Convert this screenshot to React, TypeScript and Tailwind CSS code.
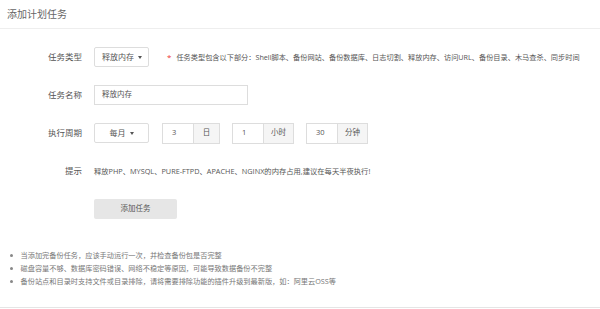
import React from "react";

const font = { fontFamily: '"Open Sans","Noto Sans CJK SC",sans-serif' };

function Row({ label, children }: { label: string; children: React.ReactNode }) {
  return (
    <div className="flex items-center h-[20px] mb-[18px]">
      <div className="w-[82px] text-right text-[8.5px] text-[#555]">{label}</div>
      <div className="ml-[12px] flex items-center">{children}</div>
    </div>
  );
}

function Caret() {
  return <span className="ml-[4px] inline-block border-x-[2.5px] border-t-[3px] border-x-transparent border-t-[#555]" />;
}

function Group({ value, unit }: { value: string; unit: string }) {
  return (
    <div className="flex h-[21px] text-[7.5px] text-[#555] mr-[12px]">
      <div className="w-[32px] border border-[#ddd] flex items-center pl-[9px] bg-white">{value}</div>
      <div className="border border-l-0 border-[#ddd] bg-[#f5f5f5] flex items-center justify-center px-[7px] min-w-[26px]">
        {unit}
      </div>
    </div>
  );
}

export default function App() {
  return (
    <div style={font} className="w-[600px] h-[309px] bg-white">
      <div className="h-[308px] border-b border-[#e5e5e5]">
        <div className="h-[29px] border-b border-[#eee] flex items-center px-[7px] text-[10px] text-[#666]">
          添加计划任务
        </div>
        <div className="pt-[18px]">
          <Row label="任务类型">
            <div className="w-[55px] h-[20px] border border-[#ddd] rounded-[2px] flex items-center pl-[7px] text-[8px] text-[#555]">
              释放内存
              <Caret />
            </div>
            <span className="ml-[18px] text-[#e33] text-[8px]">*</span>
            <span className="ml-[5px] text-[7.2px] text-[#555]">
              任务类型包含以下部分：Shell脚本、备份网站、备份数据库、日志切割、释放内存、访问URL、备份目录、木马查杀、同步时间
            </span>
          </Row>
          <Row label="任务名称">
            <div className="w-[154px] h-[20px] border border-[#ddd] flex items-center pl-[7px] text-[7.5px] text-[#555]">
              释放内存
            </div>
          </Row>
          <Row label="执行周期">
            <div className="w-[55px] h-[20px] border border-[#ddd] rounded-[2px] flex items-center justify-center text-[8px] text-[#555] mr-[13px]">
              每月
              <Caret />
            </div>
            <Group value="3" unit="日" />
            <Group value="1" unit="小时" />
            <Group value="30" unit="分钟" />
          </Row>
          <Row label="提示">
            <span className="text-[7.3px] text-[#555]">
              释放PHP、MYSQL、PURE-FTPD、APACHE、NGINX的内存占用,建议在每天半夜执行!
            </span>
          </Row>
          <div className="ml-[94px] mt-[1px] w-[83px] h-[20px] rounded-[2px] bg-[#e6e6e6] flex items-center justify-center text-[7.5px] text-[#555]">
            添加任务
          </div>
          <ul className="mt-[30px] text-[7.2px] text-[#777] leading-[13px]">
            {[
              "当添加完备份任务，应该手动运行一次，并检查备份包是否完整",
              "磁盘容量不够、数据库密码错误、网络不稳定等原因，可能导致数据备份不完整",
              "备份站点和目录时支持文件或目录排除，请将需要排除功能的插件升级到最新版，如：阿里云OSS等",
            ].map((t) => (
              <li key={t} className="flex items-center">
                <span className="w-[2.5px] h-[2.5px] rounded-full bg-[#888] ml-[10px] mr-[8px]" />
                {t}
              </li>
            ))}
          </ul>
        </div>
      </div>
    </div>
  );
}
